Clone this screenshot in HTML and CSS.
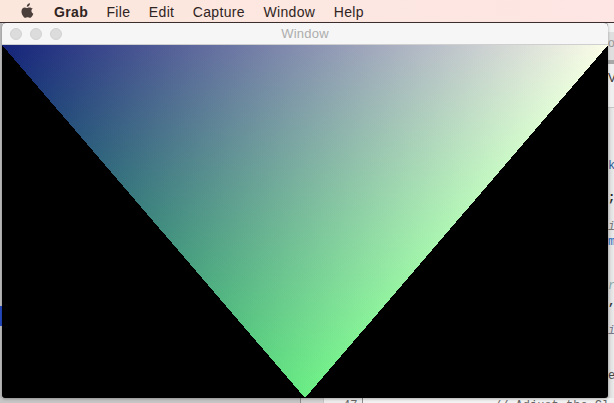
FILE: index.html
```html
<!DOCTYPE html>
<html lang="en">
<head>
<meta charset="utf-8">
<title>Window</title>
<link rel="stylesheet" href="styles.css">
</head>
<body>
<header class="menubar">
  <svg class="apple" viewBox="0 0 14 16" aria-hidden="true"><path d="M9.6 0.2c.1 1.1-.3 2-.9 2.700-.6.700-1.500 1.200-2.400 1.100-.1-1 .4-2 .9-2.600C7.800.7 8.800.2 9.600.2zM12.800 5.500c-1 .7-1.600 1.600-1.600 2.800 0 1.400.8 2.500 2.100 3.100-.4 1.100-.9 2.100-1.600 3-.7.9-1.300 1.500-2.200 1.500-.9 0-1.300-.5-2.400-.5-1.100 0-1.500.5-2.400.5-.9 0-1.600-.7-2.300-1.700C1.300 12.700.5 10.800.5 9c0-2.700 1.700-4.200 3.500-4.200 1 0 1.800.6 2.400.6.6 0 1.500-.7 2.700-.7 1.500 0 2.800.7 3.700 1.800z"/></svg>
  <nav class="menus">
    <span class="menu menu-app">Grab</span>
    <span class="menu">File</span>
    <span class="menu">Edit</span>
    <span class="menu">Capture</span>
    <span class="menu">Window</span>
    <span class="menu">Help</span>
  </nav>
</header>

<div class="backdrop">
  <span class="sliver-left"></span>
  <span class="sliver-blue"></span>
  <div class="right-strip">
    <span class="rs-top"></span>
    <span class="rs-toolbar"></span>
    <span class="rs-rule"></span>
    <span class="rs-tab"></span>
    <span class="rs-body"></span>
  </div>
  <span class="frag frag-o">o</span>
  <span class="frag frag-vi">Vi</span>
  <span class="frag frag-x">k</span>
  <span class="frag frag-semi">;</span>
  <span class="frag frag-i1">i</span>
  <span class="frag frag-m">m</span>
  <span class="frag frag-r">r</span>
  <span class="frag frag-comma">,</span>
  <span class="frag frag-i2">i</span>
  <span class="frag frag-e">e</span>
  <div class="bottom-strip">
    <span class="bs-side"></span>
    <span class="bs-fold"></span>
    <span class="bs-gutter"><span class="lineno">47</span></span>
    <span class="bs-code"><span class="peek">// Adjust the Cl</span></span>
  </div>
</div>

<main class="window">
  <div class="titlebar">
    <div class="lights"><i></i><i></i><i></i></div>
    <div class="title">Window</div>
  </div>
  <svg class="gl" viewBox="0 0 606 353" aria-hidden="true">
    <defs>
      <linearGradient id="ga" gradientUnits="userSpaceOnUse" x1="0" y1="0" x2="348.9" y2="299.5">
        <stop offset="0" stop-color="#15237a"/><stop offset="1" stop-color="#000"/>
      </linearGradient>
      <linearGradient id="gb" gradientUnits="userSpaceOnUse" x1="606" y1="0" x2="257.1" y2="299.5">
        <stop offset="0" stop-color="#fbfde8"/><stop offset="1" stop-color="#000"/>
      </linearGradient>
      <linearGradient id="gc" gradientUnits="userSpaceOnUse" x1="303" y1="353" x2="303" y2="0">
        <stop offset="0" stop-color="#6aee84"/><stop offset="1" stop-color="#000"/>
      </linearGradient>
    </defs>
    <g class="tri">
      <polygon class="tri-base" points="0,0 606,0 303,353"/>
      <polygon class="tri-layer" fill="url(#ga)" points="0,0 606,0 303,353"/>
      <polygon class="tri-layer" fill="url(#gb)" points="0,0 606,0 303,353"/>
      <polygon class="tri-layer" fill="url(#gc)" points="0,0 606,0 303,353"/>
    </g>
  </svg>
</main>
</body>
</html>
```

FILE: styles.css
```css
* { box-sizing: border-box; }
html, body { margin: 0; height: 100%; }
body {
  position: relative;
  width: 614px;
  height: 403px;
  overflow: hidden;
  background: #e2e2e2;
  font-family: "Liberation Sans", Arial, sans-serif;
}
.menubar {
  display: flex;
  align-items: center;
  height: 23px;
  padding-left: 21px;
  background: linear-gradient(90deg, #fbe7dc 0%, #fde7e1 50%, #fde6e3 100%);
  border-bottom: 1px solid #3d2f2e;
  color: #2f2422;
  font-size: 14px;
}
.apple { width: 13px; height: 15px; margin-top: -2px; fill: #4a3f3b; }
.menus { display: flex; margin-left: 20px; padding-top: 1px; }
.menu { margin-right: 18.4px; letter-spacing: 0.35px; }
.menu-app { font-weight: 700; }

.backdrop { position: absolute; inset: 23px 0 0 0; }
.sliver-left { position: absolute; left: 0; top: 0; width: 2px; height: 380px; background: #bdbdbd; }
.sliver-blue { position: absolute; left: 0; top: 283px; width: 2px; height: 20px; background: #2448c0; }
.right-strip { position: absolute; left: 608px; top: 0; width: 6px; height: 380px; display: flex; flex-direction: column; }
.rs-top { flex: none; height: 9px; background: #f2f2f2; }
.rs-toolbar { flex: none; height: 28px; background: #dfdfdf; }
.rs-rule { flex: none; height: 4px; background: #a8a8a8; }
.rs-tab { flex: none; height: 44px; background: #efefef; border-bottom: 1px solid #c4c4c4; }
.rs-body { flex: 1; background: linear-gradient(90deg, #d4d4d4, #ececec); }

.frag { position: absolute; left: 608px; font: 12px "Liberation Mono", monospace; color: #555; }
.frag-o { top: 13px; color: #999; font-family: "Liberation Sans", sans-serif; }
.frag-vi { top: 48px; color: #333; font-family: "Liberation Sans", sans-serif; }
.frag-x { top: 136px; color: #2a5a9a; }
.frag-semi { top: 168px; color: #222; font-weight: 700; }
.frag-i1 { top: 197px; color: #777; font-style: italic; }
.frag-m { top: 212px; color: #2f6fc0; }
.frag-r { top: 256px; color: #8aa; font-style: italic; }
.frag-comma { top: 272px; color: #333; font-weight: 700; }
.frag-i2 { top: 301px; color: #778; font-style: italic; }
.frag-e { top: 346px; color: #444; }

.bottom-strip { position: absolute; left: 0; right: 0; bottom: 0; height: 5px; display: flex; overflow: hidden; }
.bs-side { flex: none; width: 300px; background: #c6c6c6; }
.bs-fold { flex: none; width: 23px; background: #d2d2d2; border-left: 1px solid #8c8c8c; }
.bs-gutter { flex: none; width: 40px; padding: 0 0 0 19px; background: #ececec; border-left: 1px solid #c4c4c4; border-right: 1px solid #8c8c8c; }
.bs-code { flex: 1; padding-left: 131px; background: #f2f2f2; }
.lineno, .peek { display: block; margin-top: 1px; font: 12px/14px "Liberation Mono", monospace; color: #666; white-space: nowrap; }

.window {
  position: absolute;
  left: 2px;
  top: 23px;
  width: 606px;
  height: 375px;
  display: flex;
  flex-direction: column;
  border-radius: 4px 4px 3px 3px;
  overflow: hidden;
  background: #000;
  box-shadow: 0 1px 3px rgba(0, 0, 0, .3);
}
.titlebar {
  position: relative;
  display: flex;
  align-items: center;
  justify-content: center;
  flex: none;
  height: 22px;
  background: #f6f6f6;
  border-bottom: 1px solid #cfcfcf;
}
.lights { position: absolute; left: 8px; top: 5px; display: flex; gap: 8px; }
.lights i { width: 12px; height: 12px; border-radius: 50%; background: #dcdcdc; border: 1px solid #d2d2d2; }
.title { font-size: 13px; letter-spacing: 0.2px; color: #adadad; }
.gl { display: block; width: 606px; height: 353px; flex: none; }
.tri { isolation: isolate; }
.tri-base { fill: #000; shape-rendering: crispEdges; }
.tri-layer { mix-blend-mode: plus-lighter; shape-rendering: crispEdges; }
```
